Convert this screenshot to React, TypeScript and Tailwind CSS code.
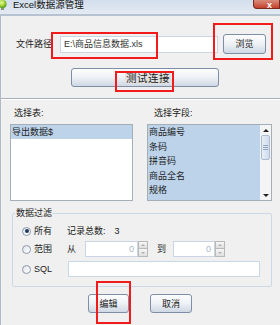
import React from 'react';

const ui = "font-['Liberation_Sans','Noto_Sans_CJK_SC',sans-serif] text-[9px] leading-[12px] text-[#222]";

const btn =
  'flex items-center justify-center rounded-[3px] border border-[#7d8ea6] bg-linear-to-b from-[#fdfdfe] via-[#eef1f5] to-[#cfd8e4] text-[#1a1a1a]';

function Spinner({ width }: { width: string }) {
  return (
    <div className={`flex h-[16px] ${width}`}>
      <div className="flex flex-1 items-center justify-end border border-[#c9d5e2] bg-white pr-[3px] text-[#a9b6c6]">0</div>
      <div className="flex w-[10px] flex-col">
        <div className="flex h-[8px] items-center justify-center border border-[#b9b9b9] bg-linear-to-b from-[#f7f7f7] to-[#dedede]">
          <span className="h-0 w-0 border-x-[2px] border-b-[2px] border-x-transparent border-b-[#b0b0b0]" />
        </div>
        <div className="flex h-[8px] items-center justify-center border border-t-0 border-[#b9b9b9] bg-linear-to-b from-[#f7f7f7] to-[#dedede]">
          <span className="h-0 w-0 border-x-[2px] border-t-[2px] border-x-transparent border-t-[#b0b0b0]" />
        </div>
      </div>
    </div>
  );
}

function Radio({ checked }: { checked?: boolean }) {
  return (
    <span className="flex h-[9px] w-[9px] items-center justify-center rounded-full border border-[#8a98a8] bg-linear-to-br from-[#dfe4ea] to-white">
      {checked && <span className="h-[4px] w-[4px] rounded-full bg-[#1f3a5c]" />}
    </span>
  );
}

export default function App() {
  const fields = ['商品编号', '条码', '拼音码', '商品全名', '规格', '单位'];

  return (
    <div className={`relative h-[325px] w-[280px] overflow-hidden bg-[#f0f0f0] ${ui}`}>
      {/* title bar */}
      <div className="flex h-[14px] items-start justify-between bg-linear-to-b from-[#d3dfec] to-[#e3eaf2]">
        <div className="flex items-start">
          <svg width="9" height="11" viewBox="0 0 9 11" className="-ml-[2px]">
            <defs>
              <radialGradient id="bulb" cx="0.4" cy="0.35" r="0.7">
                <stop offset="0" stopColor="#f6ff9a" />
                <stop offset="0.6" stopColor="#8fcf2a" />
                <stop offset="1" stopColor="#3f8a14" />
              </radialGradient>
            </defs>
            <circle cx="4.5" cy="4" r="4" fill="url(#bulb)" />
            <rect x="3" y="8" width="3" height="2" fill="#8a9a70" />
          </svg>
          <span className="-mt-[1px] ml-[6px] text-[9.5px] leading-[12px] text-[#111]">Excel数据源管理</span>
        </div>
        <div className="flex h-[9px] w-[27px] items-end justify-end rounded-bl-[4px] border border-t-0 border-[#7a2a1e] bg-linear-to-b from-[#d98b7c] to-[#c2402a] pr-[7px]">
          <span className="-mb-[2px] text-[9px] font-bold leading-[10px] text-white">x</span>
        </div>
      </div>

      {/* body */}
      <div className="h-[311px] border-l border-t-2 border-l-[#b0bac6] border-t-[#b7c3d1]">
        <div className="mt-[18px] flex h-[20px] items-center">
          <span className="ml-[15px] w-[44px]">文件路径</span>
          <div className="flex h-[17px] w-[158px] items-center border border-[#cbd6e2] bg-white pl-[3px] text-[#333]">
            E:\商品信息数据.xls
          </div>
          <button className={`${btn} ml-[5px] h-[20px] w-[43px]`}>浏览</button>
        </div>

        <div className="mt-[14px] flex">
          <button className={`${btn} ml-[70px] h-[19px] w-[148px]`}>
            <span className="ml-[6px] bg-[#e2e2e2] px-[1px] text-[10.5px] tracking-[0.5px]">测试连接</span>
          </button>
        </div>

        <div className="mt-[11px] h-[2px] border-t border-b border-t-[#a7afb9] border-b-white" />

        <div className="mt-[7px] flex">
          <div className="ml-[9px] flex w-[123px] flex-col">
            <span className="ml-[4px]">选择表:</span>
            <div className="mt-[5px] h-[77px] border border-[#a5adb6] bg-white">
              <div className="h-[14px] bg-[#bcd3ea] pl-[1px] leading-[14px]">导出数据$</div>
            </div>
          </div>
          <div className="ml-[14px] flex w-[125px] flex-col">
            <span className="ml-[7px]">选择字段:</span>
            <div className="mt-[5px] flex h-[77px] overflow-hidden border border-[#a5adb6] bg-white">
              <div className="flex-1 bg-[#bcd3ea]">
                {fields.map((f) => (
                  <div key={f} className="h-[14.5px] pl-[1px] leading-[14.5px]">
                    {f}
                  </div>
                ))}
              </div>
              <div className="flex w-[11px] flex-col bg-[#f4f4f4]">
                <div className="flex h-[10px] items-center justify-center">
                  <span className="h-0 w-0 border-x-[3px] border-b-[3px] border-x-transparent border-b-[#222]" />
                </div>
                <div className="mx-[1px] flex h-[25px] flex-col items-center justify-center gap-[1px] rounded-[2px] border border-[#a9bcd3] bg-linear-to-r from-[#e8eef6] to-[#cfdced]">
                  <span className="h-[1px] w-[5px] bg-[#8ea4c0]" />
                  <span className="h-[1px] w-[5px] bg-[#8ea4c0]" />
                  <span className="h-[1px] w-[5px] bg-[#8ea4c0]" />
                </div>
                <div className="flex-1" />
                <div className="flex h-[10px] items-center justify-center">
                  <span className="h-0 w-0 border-x-[3px] border-t-[3px] border-x-transparent border-t-[#222]" />
                </div>
              </div>
            </div>
          </div>
        </div>

        <fieldset className="ml-[11px] mt-[6px] h-[80px] w-[260px] rounded-[2px] border border-[#cbd9e7]">
          <legend className="ml-[2px] px-[1px] leading-[12px]">数据过滤</legend>
          <div className="mt-[4px] flex h-[16px] items-center">
            <div className="flex w-[54px] items-center pl-[9px]">
              <Radio checked />
              <span className="ml-[3px]">所有</span>
            </div>
            <span>记录总数:</span>
            <span className="ml-[9px]">3</span>
          </div>
          <div className="mt-[2px] flex h-[16px] items-center">
            <div className="flex w-[54px] items-center pl-[9px]">
              <Radio />
              <span className="ml-[3px]">范围</span>
            </div>
            <span className="w-[18px]">从</span>
            <Spinner width="w-[63px]" />
            <span className="ml-[9px] w-[16px]">到</span>
            <Spinner width="w-[52px]" />
          </div>
          <div className="mt-[4px] flex h-[16px] items-center">
            <div className="flex w-[55px] items-center pl-[9px]">
              <Radio />
              <span className="ml-[3px]">SQL</span>
            </div>
            <div className="h-[16px] w-[192px] border border-[#c9d8e6] bg-white" />
          </div>
        </fieldset>

        <div className="mt-[7px] flex">
          <button className={`${btn} ml-[87px] h-[19px] w-[41px] border-[#5d7594]`}>编辑</button>
          <button className={`${btn} ml-[21px] h-[19px] w-[42px]`}>取消</button>
        </div>
      </div>

      {/* red annotation boxes */}
      <div className="absolute left-[51px] top-[32px] h-[27px] w-[107px] border-2 border-[#f21b1b]" />
      <div className="absolute left-[213px] top-[23px] h-[37px] w-[60px] border-2 border-[#f21b1b]" />
      <div className="absolute left-[115px] top-[71px] h-[21px] w-[59px] border-2 border-[#f21b1b]" />
      <div className="absolute left-[96px] top-[281px] h-[43px] w-[35px] border-2 border-[#f21b1b]" />
    </div>
  );
}
